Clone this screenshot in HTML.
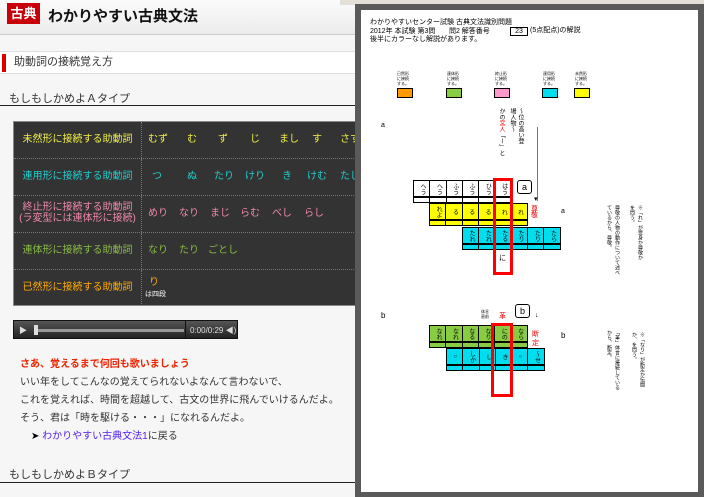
<!DOCTYPE html>
<html><head><meta charset="utf-8"><style>
*{margin:0;padding:0;box-sizing:border-box}
body{width:704px;height:497px;overflow:hidden;background:#f6f6f6;font-family:"Liberation Sans","Noto Sans CJK JP",sans-serif;position:relative}
.a{position:absolute}
.hd{left:0;top:0;width:360px;height:35px;background:linear-gradient(#fbfbfb,#ececec);border-bottom:1px solid #ccc}
.logo{left:7px;top:3px;width:33px;height:21px;background:#c8000a;color:#fff;font-weight:bold;font-size:13px;text-align:center;line-height:21px}
.title{left:48px;top:5px;font-size:15px;font-weight:bold;color:#111}
.sec{left:0;top:51px;width:360px;height:23px;background:#fff;border-top:1px solid #ddd;border-bottom:1px solid #ddd;font-size:11px;color:#333;line-height:21px;padding-left:14px}
.sec:before{content:"";position:absolute;left:2px;top:2px;width:4px;height:18px;background:#d00}
.h2{left:9px;font-size:11px;color:#333}
.ln{left:0;width:357px;height:1px;background:#222}
.tbl{left:13px;top:121px;width:350px;height:185px;background:#333;border:1px solid #888;overflow:hidden}
.row{position:absolute;left:0;width:350px;height:37px;border-bottom:1px dotted #777;font-size:10px;white-space:nowrap}
.k{position:absolute;left:0;top:0;width:128px;height:36px;border-right:1px dotted #777;text-align:center;line-height:36px}
.v{position:absolute;left:128px;top:0;line-height:36px}
.v span{position:absolute;top:0}
.pl{left:13px;top:320px;width:225px;height:19px;background:linear-gradient(#555,#222);border:1px solid #111}
.tx{left:20px;font-size:10px;color:#333}
.win{left:355px;top:4px;width:349px;height:493px;background:#5a5a5a}
.tb{left:340px;top:0;width:364px;height:5px;background:#e4e0d8}
.pg{left:361px;top:10px;width:337px;height:482px;background:#fff}
.s{font-size:7px;color:#000;line-height:8.5px}
.cr{position:absolute;display:flex}
.cr div{width:17.3px;height:17px;border:1px solid #000;margin-right:-1px;font-size:6px;line-height:7px;text-align:center;writing-mode:vertical-rl;display:flex;align-items:center;justify-content:center}
.lr{position:absolute;display:flex}
.lr div{width:17.3px;height:6px;border:1px solid #000;margin-right:-1px}
.rb{position:absolute;border:3px solid #f00}
.vt{position:absolute;writing-mode:vertical-rl;font-size:6px;line-height:8px}
</style></head><body>
<div class="a hd"></div>
<div class="a logo">古典</div>
<div class="a title">わかりやすい古典文法</div>
<div class="a sec">助動詞の接続覚え方</div>
<div class="a h2" style="top:90px">もしもしかめよＡタイプ</div>
<div class="a ln" style="top:105px"></div>
<div class="a tbl">
<div class="row" style="top:0;color:#ee4"><div class="k">未然形に接続する助動詞</div><div class="v"><span style="left:6px">むず</span><span style="left:45px">む</span><span style="left:76px">ず</span><span style="left:108px">じ</span><span style="left:137px">まし</span><span style="left:170px">す</span><span style="left:198px">さす</span></div></div>
<div class="row" style="top:37px;color:#2cc"><div class="k">連用形に接続する助動詞</div><div class="v"><span style="left:10px">つ</span><span style="left:45px">ぬ</span><span style="left:72px">たり</span><span style="left:103px">けり</span><span style="left:140px">き</span><span style="left:165px">けむ</span><span style="left:198px">たし</span></div></div>
<div class="row" style="top:74px;color:#e8a"><div class="k" style="line-height:11px;padding-top:6px">終止形に接続する助動詞<br>(ラ変型には連体形に接続)</div><div class="v"><span style="left:6px">めり</span><span style="left:37px">なり</span><span style="left:68px">まじ</span><span style="left:98px">らむ</span><span style="left:130px">べし</span><span style="left:162px">らし</span></div></div>
<div class="row" style="top:111px;color:#8b4"><div class="k">連体形に接続する助動詞</div><div class="v"><span style="left:6px">なり</span><span style="left:37px">たり</span><span style="left:66px">ごとし</span></div></div>
<div class="row" style="top:148px;color:#fa0;border-bottom:none"><div class="k">已然形に接続する助動詞</div><div class="v"><span style="left:7px;top:-5px">り</span><span style="left:3px;top:7px;color:#fff;font-size:7px">は四段</span></div></div>
</div>
<div class="a pl"><div class="a" style="left:5px;top:4px;color:#ddd;font-size:8px">▶</div><div class="a" style="left:20px;top:8px;width:150px;height:3px;background:#999"></div><div class="a" style="left:20px;top:4px;width:4px;height:10px;background:#ddd"></div><div class="a" style="left:171px;top:0;width:1px;height:17px;background:#111"></div><div class="a" style="left:176px;top:4px;color:#ddd;font-size:8px;white-space:nowrap">0:00/0:29 ◀)</div></div>
<div class="a tx" style="top:355px;color:#e20;font-weight:bold">さあ、覚えるまで何回も歌いましょう</div>
<div class="a tx" style="top:373px">いい年をしてこんなの覚えてられないよなんて言わないで、</div>
<div class="a tx" style="top:391px">これを覚えれば、時間を超越して、古文の世界に飛んでいけるんだよ。</div>
<div class="a tx" style="top:409px">そう、君は「時を駆ける・・・」になれるんだよ。</div>
<div class="a tx" style="top:427px;left:31px"><span style="color:#000">➤</span> <span style="color:#52e">わかりやすい古典文法1</span>に戻る</div>
<div class="a h2" style="top:466px">もしもしかめよＢタイプ</div>
<div class="a ln" style="top:482px"></div>

<div class="a tb"></div>
<div class="a win"></div>
<div class="a pg"></div>
<div class="a s" style="left:370px;top:19px">わかりやすいセンター試験 古典文法識別問題<br>2012年 本試験 第3問 &nbsp;&nbsp;&nbsp;&nbsp;&nbsp;&nbsp;問2 解答番号<br>後半にカラーなし解説があります。</div>
<div class="a s" style="left:510px;top:27px;width:18px;height:9px;border:1px solid #000;text-align:center;line-height:7px">23</div>
<div class="a s" style="left:530px;top:27px">(5点配点)の解説</div>
<div class="a" style="left:397px;top:88px;width:16px;height:10px;background:#f90;border:1px solid #000"></div>
<div class="a" style="left:446px;top:88px;width:16px;height:10px;background:#8c4;border:1px solid #000"></div>
<div class="a" style="left:494px;top:88px;width:16px;height:10px;background:#f9c;border:1px solid #000"></div>
<div class="a" style="left:542px;top:88px;width:16px;height:10px;background:#0de;border:1px solid #000"></div>
<div class="a" style="left:574px;top:88px;width:16px;height:10px;background:#ff0;border:1px solid #000"></div>
<div class="a" style="left:397px;top:71px;font-size:4px;line-height:5px">已然形<br>に接続<br>する。</div>
<div class="a" style="left:447px;top:71px;font-size:4px;line-height:5px">連体形<br>に接続<br>する。</div>
<div class="a" style="left:495px;top:71px;font-size:4px;line-height:5px">終止形<br>に接続<br>する。</div>
<div class="a" style="left:543px;top:71px;font-size:4px;line-height:5px">連用形<br>に接続<br>する。</div>
<div class="a" style="left:575px;top:71px;font-size:4px;line-height:5px">未然形<br>に接続<br>する。</div>
<div class="a s" style="left:381px;top:122px">a</div>
<div class="vt" style="left:497px;top:108px;height:70px">かの<span style="color:#e00">宮人</span>「ー」と</div>
<div class="vt" style="left:508px;top:108px;height:40px">〜位の高い登場人物〜</div>
<div class="a" style="left:537px;top:127px;width:1px;height:74px;background:#777"></div>
<div class="a s" style="left:534px;top:196px">▾</div>

<div class="cr" style="left:413px;top:180px"><div>へう</div><div>へう</div><div>ふう</div><div>ふう</div><div>ひう</div><div>はう</div></div>
<div class="lr" style="left:413px;top:197px"><div></div><div></div><div></div><div></div><div></div><div></div></div>
<div class="cr" style="left:429px;top:203px"><div style="background:#ff0">れよ</div><div style="background:#ff0">る</div><div style="background:#ff0">る</div><div style="background:#ff0">る</div><div style="background:#ff0">れ</div><div style="background:#ff0">れ</div></div>
<div class="lr" style="left:429px;top:220px"><div style="background:#ff0"></div><div style="background:#ff0"></div><div style="background:#ff0"></div><div style="background:#ff0"></div><div style="background:#ff0"></div><div style="background:#ff0"></div></div>
<div class="cr" style="left:462px;top:227px"><div style="background:#0de">たれ</div><div style="background:#0de">たれ</div><div style="background:#0de">たる</div><div style="background:#0de">たり</div><div style="background:#0de">たり</div><div style="background:#0de">たら</div></div>
<div class="lr" style="left:462px;top:244px"><div style="background:#0de"></div><div style="background:#0de"></div><div style="background:#0de"></div><div style="background:#0de"></div><div style="background:#0de"></div><div style="background:#0de"></div></div>
<div class="s" style="position:absolute;left:499px;top:255px">に</div>
<div class="rb" style="left:493px;top:178px;width:20px;height:97px"></div>
<div class="a s" style="left:517px;top:180px;width:15px;height:14px;border:1px solid #000;border-radius:3px;text-align:center;font-size:9px;line-height:12px">a</div>
<div class="a s" style="left:531px;top:207px;color:#e00;line-height:6px;width:8px">尊<br>敬</div>
<div class="a s" style="left:561px;top:208px">a</div>
<div class="vt" style="left:605px;top:205px;height:70px;font-size:5px">尊敬の人物の動作について述べているから、尊敬。</div>
<div class="vt" style="left:628px;top:205px;height:55px;font-size:5px">※「れ」が受身か尊敬かを問う。</div>

<div class="a s" style="left:381px;top:312px;font-size:8px">b</div>
<div class="a" style="left:481px;top:309px;font-size:4px;line-height:5px">体言<br>直前</div>
<div class="a s" style="left:499px;top:313px;color:#e00">革</div>
<div class="a s" style="left:515px;top:304px;width:15px;height:14px;border:1px solid #000;border-radius:3px;text-align:center;font-size:9px;line-height:12px">b</div>
<div class="a s" style="left:535px;top:312px">↓</div>
<div class="cr" style="left:429px;top:325px"><div style="background:#8c4">なれ</div><div style="background:#8c4">なれ</div><div style="background:#8c4">なる</div><div style="background:#8c4">なり</div><div style="background:#8c4">にの</div><div style="background:#8c4">なら</div></div>
<div class="lr" style="left:429px;top:342px"><div style="background:#8c4"></div><div style="background:#8c4"></div><div style="background:#8c4"></div><div style="background:#8c4"></div><div style="background:#8c4"></div><div style="background:#8c4"></div></div>
<div class="cr" style="left:446px;top:348px"><div style="background:#0de">○</div><div style="background:#0de">しか</div><div style="background:#0de">し</div><div style="background:#0de">き</div><div style="background:#0de">○</div><div style="background:#0de">〜せ</div></div>
<div class="lr" style="left:446px;top:365px"><div style="background:#0de"></div><div style="background:#0de"></div><div style="background:#0de"></div><div style="background:#0de"></div><div style="background:#0de"></div><div style="background:#0de"></div></div>
<div class="rb" style="left:491px;top:323px;width:22px;height:74px"></div>
<div class="a s" style="left:532px;top:330px;color:#e00;line-height:9px">断<br>定</div>
<div class="a s" style="left:561px;top:332px;font-size:8px">b</div>
<div class="vt" style="left:605px;top:330px;height:62px;font-size:5px">「革」体言に接続しているから、断定。</div>
<div class="vt" style="left:630px;top:332px;height:55px;font-size:5px">※「なり」が断定か伝聞か、を問う。</div>
</body></html>
